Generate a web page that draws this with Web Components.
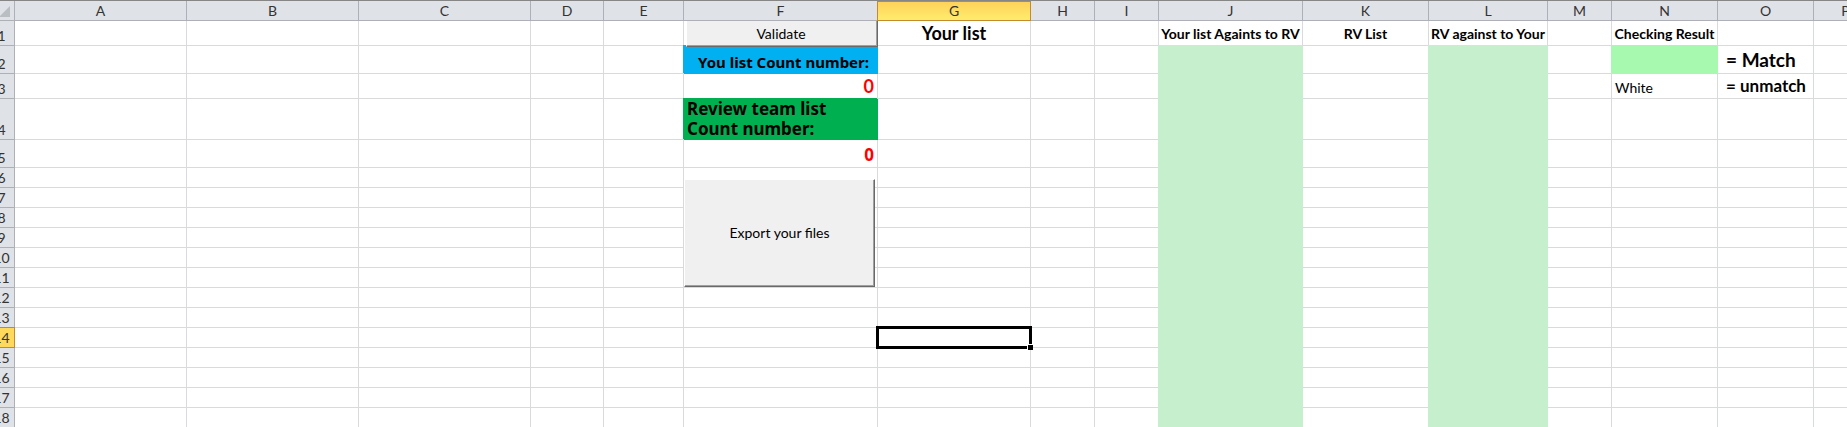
<!DOCTYPE html>
<html lang="en">
<head>
<meta charset="utf-8">
<title>List check</title>
<style>
  body { margin: 0; background: #fff; }
</style>
</head>
<body>

<sheet-grid active="G14" fills="F2:#00b0f0 F4:#00b050 N2:#a6f9af J2-18:#c6efce L2-18:#c6efce">
  <sheet-button slot="F1" class="validate">Validate</sheet-button>
  <sheet-cell slot="G1" align="center" bold size="18">Your list</sheet-cell>
  <sheet-cell slot="J1" align="center" bold>Your list Againts to RV</sheet-cell>
  <sheet-cell slot="K1" align="center" bold>RV List</sheet-cell>
  <sheet-cell slot="L1" align="center" bold>RV against to Your</sheet-cell>
  <sheet-cell slot="N1" align="center" bold>Checking Result</sheet-cell>
  <sheet-cell slot="F2" align="right" bold face="humanist" size="15" indent>You list Count number:</sheet-cell>
  <sheet-cell slot="O2" bold size="19" indent>= Match</sheet-cell>
  <sheet-cell slot="F3" align="right" bold size="18" red>0</sheet-cell>
  <sheet-cell slot="N3">White</sheet-cell>
  <sheet-cell slot="O3" bold size="17" indent>= unmatch</sheet-cell>
  <sheet-cell slot="F4" bold face="humanist" size="17" wrap>Review team list<br>Count number:</sheet-cell>
  <sheet-cell slot="F5" align="right" bold face="humanist" size="17" red>0</sheet-cell>
  <sheet-button slot="F6" class="export">Export your files</sheet-button>
</sheet-grid>

<script>
class SheetCell extends HTMLElement {
  constructor() {
    super();
    this.attachShadow({ mode: 'open' }).innerHTML = `
      <style>
        :host { display: block; padding: 0 3px; font: 14px/20px Lato, "Liberation Sans", sans-serif; color: #000; white-space: nowrap; }
        :host([align="center"]) { text-align: center; padding: 0; }
        :host([align="right"]) { text-align: right; }
        :host([indent]) { padding: 0 8px; }
        :host([bold]) { font-weight: 700; line-height: 22px; }
        :host([red]) { color: #f00; }
        :host([size="15"]) { font-size: 15px; }
        :host([size="17"]) { font-size: 17px; line-height: 24px; }
        :host([size="18"]) { font-size: 18px; line-height: 24px; }
        :host([size="19"]) { font-size: 19px; line-height: 26px; }
        :host([wrap]) { line-height: 20px; }
        :host([face="humanist"]) { font-family: "Noto Sans", "Open Sans", sans-serif; }
      </style><slot></slot>`;
  }
}
customElements.define('sheet-cell', SheetCell);

class SheetButton extends HTMLElement {
  constructor() {
    super();
    this.attachShadow({ mode: 'open' }).innerHTML = `
      <style>
        :host { position: absolute; z-index: 3; display: block; }
        :host(.validate) { inset: 0 -1px -2px 2px; }
        :host(.export) { top: 11px; left: 0; right: 2px; height: 108px; }
        button {
          display: block; width: 100%; height: 100%; box-sizing: border-box; margin: 0; padding: 0;
          background: #f0f0f0; color: #000; border: 1px solid;
          border-color: #fff #696969 #696969 #fff; border-radius: 0;
          box-shadow: inset -1px -1px 0 #a0a0a0;
          font: 14px/20px Lato, "Liberation Sans", sans-serif;
        }
        :host(.validate) button { border-top: 0; padding: 0 2px 0 0; }
      </style><button type="button"><slot></slot></button>`;
  }
}
customElements.define('sheet-button', SheetButton);

const COLUMNS = { A: 172, B: 172, C: 172, D: 73, E: 80, F: 194, G: 153, H: 64, I: 64, J: 144, K: 126, L: 119, M: 64, N: 106, O: 96, P: 64 };
const ROWS = [25, 28, 25, 41, 28, ...Array(13).fill(20)];

class SheetGrid extends HTMLElement {
  constructor() {
    super();
    this.attachShadow({ mode: 'open' });
  }
  connectedCallback() {
    const active = this.getAttribute('active');
    const fills = {};
    for (const part of this.getAttribute('fills').split(' ')) {
      const [, col, from, to, color] = part.match(/([A-Z])(\d+)-?(\d*):(.+)/);
      for (let r = +from; r <= +(to || from); r++) fills[col + r] = color;
    }
    const letters = Object.keys(COLUMNS);
    const cols = letters.map(c => `<col style="width:${COLUMNS[c]}px">`).join('');
    const heads = letters.map(c => `<th scope="col"${c === active[0] ? ' class="on"' : ''}>${c}</th>`).join('');
    const rows = ROWS.map((h, i) => {
      const n = i + 1;
      const cells = letters.map(c => {
        const id = c + n;
        const fill = fills[id] ? ` class="fill" style="--fill:${fills[id]}"` : '';
        const cursor = id === active ? '<div class="cursor"><i></i></div>' : '';
        return `<td${fill}><slot name="${id}"></slot>${cursor}</td>`;
      }).join('');
      return `<tr style="height:${h}px"><th scope="row"${n === +active.slice(1) ? ' class="on"' : ''}>${n}</th>${cells}</tr>`;
    }).join('');
    this.shadowRoot.innerHTML = `
      <style>
        :host { display: block; height: 100vh; overflow: hidden; box-sizing: border-box; border-top: 1px solid #868686; }
        /* The row numbers are scrolled partly off the left edge. */
        table { table-layout: fixed; width: 1889px; margin-left: -11px; border-spacing: 0; border-collapse: separate; }
        .numbers { width: 26px; }
        th, td { position: relative; box-sizing: border-box; padding: 0; border: solid #d9dadb; border-width: 0 1px 1px 0; }
        td { vertical-align: bottom; }
        th, .corner { background: #dfe2e7; border-color: #adb1b7; }
        th { color: #333; font: 14px/18px Lato, "Open Sans", sans-serif; }
        thead tr { height: 20px; }
        tbody th { vertical-align: bottom; }
        th.on { z-index: 2; background: #ffd95c; border-color: #c58a2c; box-shadow: 0 -1px 0 #c58a2c; }
        thead th.on { background: linear-gradient(#ffd158, #ffec6e); box-shadow: -1px 0 0 #c58a2c, inset 0 1px 0 #c58a2c; }
        .fill { z-index: 1; background: var(--fill); border-color: var(--fill); box-shadow: -1px -1px 0 var(--fill); }
        .corner svg { position: absolute; right: 4px; bottom: 3px; display: block; }
        .cursor { position: absolute; z-index: 2; inset: -2px; border: 3px solid #000; }
        .cursor i { position: absolute; right: -4px; bottom: -4px; width: 5px; height: 5px; background: #000; box-shadow: -1px -1px 0 #fff; }
      </style>
      <table>
        <colgroup><col class="numbers">${cols}</colgroup>
        <thead><tr><td class="corner"><svg width="11" height="11" aria-hidden="true"><path d="M11 0V11H0Z" fill="#b9bec3"/></svg></td>${heads}</tr></thead>
        <tbody>${rows}</tbody>
      </table>`;
  }
}
customElements.define('sheet-grid', SheetGrid);
</script>
</body>
</html>
